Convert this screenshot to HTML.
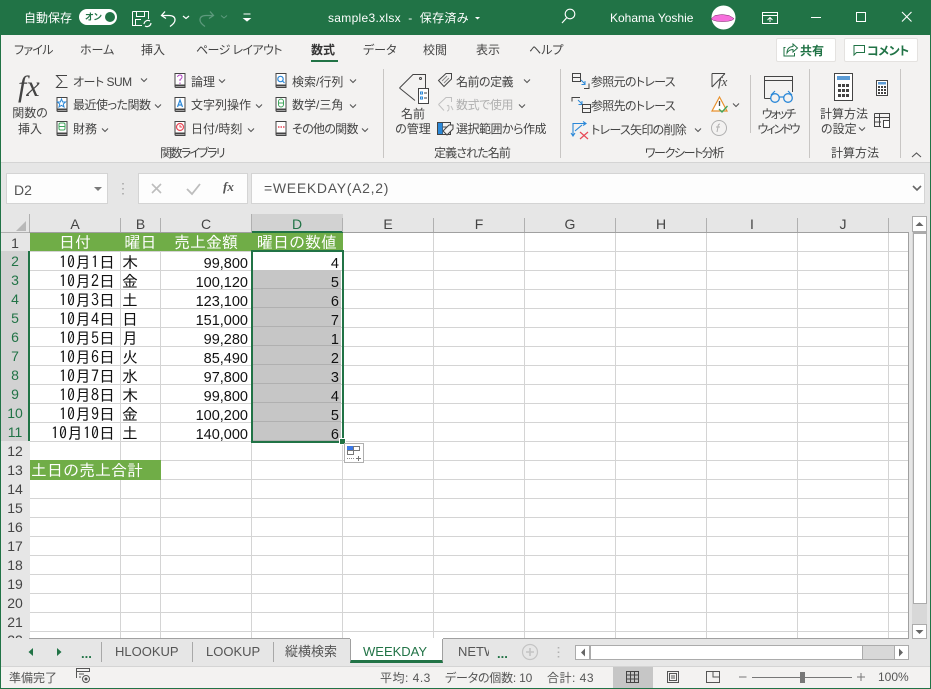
<!DOCTYPE html>
<html lang="ja"><head><meta charset="utf-8"><title>sample3.xlsx</title>
<style>
*{box-sizing:border-box}
html,body{margin:0;padding:0;width:931px;height:689px;overflow:hidden;background:#e6e6e6}
body{position:relative;font-family:"Liberation Sans","Noto Sans CJK JP",sans-serif;font-size:12px;color:#444;font-feature-settings:"palt"}
.a,.t,.c,.r,.h,.n{position:absolute}
.t{white-space:nowrap;line-height:16px;height:16px}
.m{text-align:center;transform:translateX(-50%)}
.w{color:#fff}
.c{font-family:"IPAGothic","Noto Sans CJK JP",sans-serif;font-size:16px;line-height:21px;height:19px;color:#111;white-space:nowrap;font-feature-settings:normal}
.c b{font:14.5px/21px "Liberation Sans",sans-serif;color:#111}
.dt{left:30px;width:85px;text-align:right}
.dy{left:122px}
.am{left:161px;width:87px;text-align:right}
.d{left:252px;width:87px;text-align:right}
.g{color:#fff;text-align:center;font-weight:normal}
.n{left:1px;width:28px;text-align:center;font-size:14px;line-height:21px;height:19px;color:#444}
.s{background:#d2d2d2;width:28px;color:#217346}
.h{top:214px;height:18px;text-align:center;font-size:14px;line-height:20px;color:#444}
.tab{position:absolute;top:644px;line-height:16px;font-size:13px;color:#555;white-space:nowrap}
.sb{position:absolute;top:670px;line-height:16px;font-size:12px;color:#555;white-space:nowrap}
</style></head><body>

<div class="a" style="left:0;top:0;width:931px;height:35px;background:#217346"></div>
<div class="a" style="left:1px;top:35px;width:929px;height:127px;background:#f3f2f1"></div>
<div class="a" style="left:1px;top:162px;width:929px;height:1px;background:#d4d4d4"></div>
<div class="a" style="left:0;top:0;width:1px;height:689px;background:#217346"></div>
<div class="a" style="left:930px;top:0;width:1px;height:689px;background:#217346"></div>

<div class="t w" style="left:24px;top:10px">自動保存</div>
<div class="a" style="left:79px;top:9px;width:38px;height:16px;border-radius:8px;background:#fff"></div>
<div class="a" style="left:105px;top:12px;width:10px;height:10px;border-radius:5px;background:#217346"></div>
<div class="t" style="left:85px;top:9px;font-size:9px;color:#217346;font-weight:bold">オン</div>
<div class="t w" style="left:328px;top:10px;font-size:12px;letter-spacing:.3px">sample3.xlsx&nbsp; -&nbsp; 保存済み</div>
<div class="t w" style="left:610px;top:10px;font-size:12px">Kohama Yoshie</div>

<div class="t" style="left:14px;top:42px;letter-spacing:-.7px">ファイル</div>
<div class="t" style="left:80px;top:42px">ホーム</div>
<div class="t" style="left:141px;top:42px">挿入</div>
<div class="t" style="left:196px;top:42px;letter-spacing:-.6px">ページ レイアウト</div>
<div class="t" style="left:311px;top:42px;font-weight:bold;color:#333">数式</div>
<div class="a" style="left:311px;top:60px;width:27px;height:2px;background:#217346"></div>
<div class="t" style="left:363px;top:42px">データ</div>
<div class="t" style="left:423px;top:42px">校閲</div>
<div class="t" style="left:476px;top:42px">表示</div>
<div class="t" style="left:529px;top:42px">ヘルプ</div>

<div class="a" style="left:776px;top:38px;width:60px;height:24px;background:#fff;border:1px solid #e4e2e0;border-radius:2px"></div>
<div class="t" style="left:800px;top:43px;font-weight:bold;color:#217346">共有</div>
<div class="a" style="left:844px;top:38px;width:74px;height:24px;background:#fff;border:1px solid #e4e2e0;border-radius:2px"></div>
<div class="t" style="left:867px;top:43px;font-weight:bold;color:#217346;letter-spacing:-.4px">コメント</div>

<div class="t" style="left:18px;top:69px;height:36px;font:italic 30px/36px 'Liberation Serif',serif;color:#444">fx</div>
<div class="t m" style="left:30px;top:105px">関数の</div>
<div class="t m" style="left:30px;top:121px">挿入</div>
<div class="t" style="left:73px;top:74px;letter-spacing:-.5px">オート SUM</div>
<div class="t" style="left:73px;top:97px;letter-spacing:-.5px">最近使った関数</div>
<div class="t" style="left:73px;top:121px">財務</div>
<div class="t" style="left:191px;top:74px">論理</div>
<div class="t" style="left:191px;top:97px">文字列操作</div>
<div class="t" style="left:191px;top:121px">日付/時刻</div>
<div class="t" style="left:292px;top:74px">検索/行列</div>
<div class="t" style="left:292px;top:97px">数学/三角</div>
<div class="t" style="left:292px;top:121px;letter-spacing:-.7px">その他の関数</div>
<div class="t m" style="left:192px;top:145px;letter-spacing:-1.7px">関数ライブラリ</div>

<div class="t m" style="left:413px;top:106px">名前</div>
<div class="t m" style="left:413px;top:121px">の管理</div>
<div class="t" style="left:456px;top:74px;letter-spacing:-.5px">名前の定義</div>
<div class="t" style="left:456px;top:97px;color:#b0b0b0;letter-spacing:-.4px">数式で使用</div>
<div class="t" style="left:456px;top:121px;letter-spacing:-.5px">選択範囲から作成</div>
<div class="t m" style="left:472px;top:145px;letter-spacing:-.9px">定義された名前</div>

<div class="t" style="left:591px;top:74px;letter-spacing:-.7px">参照元のトレース</div>
<div class="t" style="left:591px;top:98px;letter-spacing:-.7px">参照先のトレース</div>
<div class="t" style="left:591px;top:122px;letter-spacing:-.7px">トレース矢印の削除</div>
<div class="t m" style="left:684px;top:145px;letter-spacing:-1.4px">ワークシート分析</div>
<div class="t m" style="left:778px;top:106px;letter-spacing:-2px">ウォッチ</div>
<div class="t m" style="left:778px;top:121px;letter-spacing:-2px">ウィンドウ</div>
<div class="t m" style="left:844px;top:106px">計算方法</div>
<div class="t" style="left:821px;top:121px">の設定</div>
<div class="t m" style="left:855px;top:145px">計算方法</div>

<div class="a" style="left:6px;top:173px;width:102px;height:31px;background:#fdfdfd;border:1px solid #d4d4d4"></div>
<div class="t" style="left:14px;top:182px;font-size:14px;color:#555">D2</div>
<div class="a" style="left:138px;top:173px;width:110px;height:31px;background:#fdfdfd;border:1px solid #d4d4d4"></div>
<div class="t" style="left:223px;top:179px;font:italic bold 13px/16px 'Liberation Serif',serif;color:#555">fx</div>
<div class="a" style="left:251px;top:173px;width:674px;height:31px;background:#fdfdfd;border:1px solid #d4d4d4"></div>
<div class="t" style="left:264px;top:180px;font-size:14px;letter-spacing:.7px;color:#555">=WEEKDAY(A2,2)</div>

<div class="a" style="left:30px;top:233px;width:878px;height:405px;background:#fff repeating-linear-gradient(to bottom,transparent 0 18px,#d4d4d4 18px 19px)"></div>
<svg class="a" style="left:0;top:233px" width="908" height="405"><path d="M120.5 0V405M160.5 0V405M251.5 0V405M342.5 0V405M433.5 0V405M524.5 0V405M615.5 0V405M706.5 0V405M797.5 0V405M888.5 0V405" stroke="#d4d4d4" fill="none"/></svg>
<div class="a" style="left:29px;top:232px;width:879px;height:1px;background:#a0a0a0"></div>
<div class="a" style="left:908px;top:232px;width:1px;height:406px;background:#a0a0a0"></div>
<div class="a" style="left:29px;top:638px;width:880px;height:1px;background:#a0a0a0"></div>

<div class="a" style="left:252px;top:214px;width:91px;height:19px;background:#d2d2d2"></div>
<div class="a" style="left:252px;top:231px;width:91px;height:2px;background:#217346"></div>
<svg class="a" style="left:0;top:214px" width="908" height="19"><path d="M29.5 0V18M120.5 4V18M160.5 4V18M251.5 0V18M342.5 4V18M433.5 4V18M524.5 4V18M615.5 4V18M706.5 4V18M797.5 4V18M888.5 4V18" stroke="#b0b0b0" fill="none"/><path d="M16 17L26 17L26 7Z" fill="#b8b8b8"/></svg>
<div class="h" style="left:30px;width:90px">A</div>
<div class="h" style="left:121px;width:39px">B</div>
<div class="h" style="left:161px;width:90px">C</div>
<div class="h" style="left:252px;width:90px;color:#217346">D</div>
<div class="h" style="left:343px;width:90px">E</div>
<div class="h" style="left:434px;width:90px">F</div>
<div class="h" style="left:525px;width:90px">G</div>
<div class="h" style="left:616px;width:90px">H</div>
<div class="h" style="left:707px;width:90px">I</div>
<div class="h" style="left:798px;width:90px">J</div>

<div class="a" style="left:1px;top:232px;width:28px;height:1px;background:#b0b0b0"></div>
<div class="n" style="top:233px;height:18px">1</div>
<div class="n s" style="top:251px;height:190px"></div>
<div class="n" style="top:251px;color:#217346">2</div>
<div class="n" style="top:270px;color:#217346">3</div>
<div class="n" style="top:289px;color:#217346">4</div>
<div class="n" style="top:308px;color:#217346">5</div>
<div class="n" style="top:327px;color:#217346">6</div>
<div class="n" style="top:346px;color:#217346">7</div>
<div class="n" style="top:365px;color:#217346">8</div>
<div class="n" style="top:384px;color:#217346">9</div>
<div class="n" style="top:403px;color:#217346">10</div>
<div class="n" style="top:422px;color:#217346">11</div>
<div class="n" style="top:441px">12</div>
<div class="n" style="top:460px">13</div>
<div class="n" style="top:479px">14</div>
<div class="n" style="top:498px">15</div>
<div class="n" style="top:517px">16</div>
<div class="n" style="top:536px">17</div>
<div class="n" style="top:555px">18</div>
<div class="n" style="top:574px">19</div>
<div class="n" style="top:593px">20</div>
<div class="n" style="top:612px">21</div>
<div class="a" style="left:1px;top:631px;width:28px;height:7px;overflow:hidden;font-size:14px;line-height:19px;text-align:center">22</div>
<div class="a" style="left:28px;top:251px;width:2px;height:190px;background:#217346"></div>

<div class="a" style="left:30px;top:233px;width:313px;height:18px;background:#70ad47"></div>
<div class="c g" style="left:30px;top:232px;width:90px">日付</div>
<div class="c g" style="left:121px;top:232px;width:39px">曜日</div>
<div class="c g" style="left:161px;top:232px;width:90px">売上金額</div>
<div class="c g" style="left:252px;top:232px;width:90px">曜日の数値</div>

<div class="a" style="left:253px;top:270px;width:88px;height:171px;background:#c6c6c6 repeating-linear-gradient(to bottom,transparent 0 18px,#b0b0b0 18px 19px)"></div>
<div class="a" style="left:251px;top:250px;width:93px;height:193px;border:2px solid #217346"></div>
<div class="a" style="left:339px;top:438px;width:7px;height:7px;background:#217346;border:1px solid #fff"></div>

<div class="c dt" style="top:252px">10月1日</div><div class="c dy" style="top:252px">木</div><div class="c am" style="top:252px"><b>99,800</b></div><div class="c d" style="top:252px"><b>4</b></div>
<div class="c dt" style="top:271px">10月2日</div><div class="c dy" style="top:271px">金</div><div class="c am" style="top:271px"><b>100,120</b></div><div class="c d" style="top:271px"><b>5</b></div>
<div class="c dt" style="top:290px">10月3日</div><div class="c dy" style="top:290px">土</div><div class="c am" style="top:290px"><b>123,100</b></div><div class="c d" style="top:290px"><b>6</b></div>
<div class="c dt" style="top:309px">10月4日</div><div class="c dy" style="top:309px">日</div><div class="c am" style="top:309px"><b>151,000</b></div><div class="c d" style="top:309px"><b>7</b></div>
<div class="c dt" style="top:328px">10月5日</div><div class="c dy" style="top:328px">月</div><div class="c am" style="top:328px"><b>99,280</b></div><div class="c d" style="top:328px"><b>1</b></div>
<div class="c dt" style="top:347px">10月6日</div><div class="c dy" style="top:347px">火</div><div class="c am" style="top:347px"><b>85,490</b></div><div class="c d" style="top:347px"><b>2</b></div>
<div class="c dt" style="top:366px">10月7日</div><div class="c dy" style="top:366px">水</div><div class="c am" style="top:366px"><b>97,800</b></div><div class="c d" style="top:366px"><b>3</b></div>
<div class="c dt" style="top:385px">10月8日</div><div class="c dy" style="top:385px">木</div><div class="c am" style="top:385px"><b>99,800</b></div><div class="c d" style="top:385px"><b>4</b></div>
<div class="c dt" style="top:404px">10月9日</div><div class="c dy" style="top:404px">金</div><div class="c am" style="top:404px"><b>100,200</b></div><div class="c d" style="top:404px"><b>5</b></div>
<div class="c dt" style="top:423px">10月10日</div><div class="c dy" style="top:423px">土</div><div class="c am" style="top:423px"><b>140,000</b></div><div class="c d" style="top:423px"><b>6</b></div>

<div class="a" style="left:30px;top:460px;width:131px;height:20px;background:#70ad47"></div>
<div class="c" style="left:31px;top:460px;color:#fff">土日の売上合計</div>

<div class="a" style="left:344px;top:443px;width:20px;height:20px;background:#fff;border:1px solid #b0b0b0"></div>

<div class="a" style="left:912px;top:216px;width:15px;height:422px;background:#d8d8d8"></div>
<div class="a" style="left:912px;top:216px;width:15px;height:16px;background:#fff;border:1px solid #ababab"></div>
<div class="a" style="left:913px;top:232px;width:14px;height:372px;background:#fff;border:1px solid #ababab;border-top:2px solid #ababab"></div>
<div class="a" style="left:912px;top:624px;width:15px;height:15px;background:#fff;border:1px solid #ababab"></div>

<div class="a" style="left:1px;top:639px;width:929px;height:27px;background:#e6e6e6"></div>
<div class="a" style="left:350px;top:638px;width:93px;height:25px;background:#fff;border:1px solid #a0a0a0;border-top:0;border-bottom:3px solid #217346"></div>
<div class="a" style="left:350px;top:638px;width:93px;height:1px;background:#fff"></div>
<div class="a" style="left:101px;top:642px;width:1px;height:20px;background:#a8a8a8"></div>
<div class="a" style="left:192px;top:642px;width:1px;height:20px;background:#a8a8a8"></div>
<div class="a" style="left:273px;top:642px;width:1px;height:20px;background:#a8a8a8"></div>
<div class="t" style="left:81px;top:646px;font-weight:bold;font-size:13px;color:#217346">...</div>
<div class="tab" style="left:115px">HLOOKUP</div>
<div class="tab" style="left:206px">LOOKUP</div>
<div class="tab" style="left:285px">縦横検索</div>
<div class="tab" style="left:363px;color:#217346">WEEKDAY</div>
<div class="tab" style="left:458px;width:31px;overflow:hidden">NETWORK</div>
<div class="t" style="left:497px;top:646px;font-weight:bold;font-size:13px;color:#217346">...</div>

<div class="a" style="left:575px;top:645px;width:334px;height:15px;background:#d8d8d8;border:1px solid #ababab"></div>
<div class="a" style="left:575px;top:645px;width:15px;height:15px;background:#fff;border:1px solid #ababab"></div>
<div class="a" style="left:590px;top:645px;width:273px;height:15px;background:#fff;border:1px solid #ababab"></div>
<div class="a" style="left:894px;top:645px;width:15px;height:15px;background:#fff;border:1px solid #ababab"></div>

<div class="a" style="left:1px;top:666px;width:929px;height:22px;background:#f3f2f1;border-top:1px solid #d4d4d4"></div>
<div class="a" style="left:0;top:688px;width:931px;height:1px;background:#217346"></div>
<div class="a" style="left:613px;top:667px;width:40px;height:21px;background:#c6c6c6"></div>
<div class="sb" style="left:9px">準備完了</div>
<div class="sb" style="left:380px;letter-spacing:.5px">平均: 4.3</div>
<div class="sb" style="left:445px;letter-spacing:-.2px">データの個数: 10</div>
<div class="sb" style="left:547px;letter-spacing:.5px">合計: 43</div>
<div class="sb" style="left:878px;top:669px">100%</div>

<svg class="a" style="left:0;top:0" width="931" height="689" fill="none" stroke-width="1">
<defs>
<g id="bk"><path d="M.5 .5H10.5V14.5H1.5Q.5 14.5 .5 13.5Z" fill="#fff" stroke="#444"/><path d="M.5 12.5H10.5" stroke="#444" stroke-width="2"/></g>
<path id="cv" d="M-3 -1.5L0 1.5L3 -1.5" stroke="#555" stroke-width="1.1"/>
</defs>

<!-- title bar icons -->
<g stroke="#fff">
<path d="M132.5 11.5H148.5V19M132.5 11.5V25.5H142M136.5 11.5V16.5H144.5V11.5M135.5 25V19.5H141"/>
<path d="M144 24a4 4 0 0 1 6 -3M151 23a4 4 0 0 1 -6 3" stroke-width="1.2"/>
<path d="M165 11.5L161.5 15.5L166 18.5M162 15.5H169Q175 15.5 175 20Q175 23 170 26.5" stroke-width="1.3"/>
<path d="M243.5 14H250.5" /><path d="M244 18.5H250L247 21Z" fill="#fff"/>
<circle cx="570" cy="14" r="4.8" stroke-width="1.1"/><path d="M566.5 18L562 23" stroke-width="1.2"/>
<path d="M762.5 12.5H777.5V23.5H762.5ZM762.5 15.5H777.5M770 22V18M767.5 20L770 17.5L772.5 20"/>
<path d="M811 17.5H821"/><rect x="856.5" y="12.5" width="9" height="9"/><path d="M902 12L911.5 21.5M911.5 12L902 21.5" stroke-width="1.1"/>
</g>
<path d="M183 16L186 18.5L189 16" stroke="#fff" stroke-width="1.2"/>
<path d="M475 17H480L477.5 19.5Z" fill="#fff"/>
<g stroke="#5d9a7d"><path d="M205 11.5L208.5 15.5L204 18.5M208 15.5H201Q195 15.5 195 20Q195 23 200 26.5" transform="translate(5 0)" stroke-width="1.3"/></g>
<path d="M221 15.5L224 18L227 15.5" stroke="#5d9a7d"/>
<circle cx="723.5" cy="17.5" r="12" fill="#fff"/>
<path d="M711 19L715 15.5L722 14.5L729 15.5L734 18.5Q733 21 725 21.5Q715 22 711 19Z" fill="#f66fdc" stroke="#7a2a6a" stroke-width=".5"/>

<!-- share / comment -->
<path d="M785.5 47.5H784V56H794.5V53M787 53Q787 47 793 46.5V44L797.5 48L793 52V49.5Q789 49.5 787 53Z" stroke="#217346"/>
<path d="M853.5 45.5H864.5V52.5H856.5L854 55V45.5Z" stroke="#217346"/>

<!-- fx group -->
<path d="M67 75.5H56.5L62 81.5L56.5 87.5H67.5" stroke="#444"/>
<use href="#bk" x="56.5" y="97"/><path d="M61.5 99L62.7 102H65.5L63.3 104L64 107L61.5 105.3L59 107L59.7 104L57.5 102H60.3Z" stroke="#2b88d8" fill="#fff"/>
<use href="#bk" x="56.5" y="121"/><rect x="59" y="123" width="6" height="7" rx="1.5" stroke="#3fa45b"/><path d="M59 126.5H65" stroke="#3fa45b"/>
<use href="#bk" x="174.5" y="73"/><path d="M177.5 77Q178 75 180 75Q182 75 182 77Q182 78.5 180 79.5V81M180 82.5V84" stroke="#b146c2"/>
<use href="#bk" x="174.5" y="97"/><path d="M177.5 107L180 100L182.5 107M178.5 105H181.5" stroke="#2b88d8" stroke-width="1.2"/>
<use href="#bk" x="174.5" y="121"/><circle cx="180" cy="127" r="3.5" stroke="#e74856" stroke-width="1.2"/><path d="M180 125V127H182" stroke="#e74856"/>
<use href="#bk" x="275.5" y="73"/><circle cx="280.5" cy="79" r="2.7" stroke="#2b88d8" stroke-width="1.2"/><path d="M282.5 81L284.5 83" stroke="#2b88d8" stroke-width="1.2"/>
<use href="#bk" x="275.5" y="97"/><rect x="278.5" y="99" width="5" height="8" rx="2.5" stroke="#3fa45b"/><path d="M278.5 103H283.5" stroke="#3fa45b"/>
<use href="#bk" x="275.5" y="121"/><path d="M278 127H279.5M280.5 127H282M283 127H284.5" stroke="#e74856" stroke-width="1.5"/>
<use href="#cv" x="144" y="80"/><use href="#cv" x="158" y="106"/><use href="#cv" x="105" y="130"/>
<use href="#cv" x="222" y="81"/><use href="#cv" x="259" y="106"/><use href="#cv" x="251" y="130"/>
<use href="#cv" x="353" y="81"/><use href="#cv" x="353" y="106"/><use href="#cv" x="365" y="130"/>

<!-- separators -->
<path d="M383.5 69V158M560.5 69V158M750.5 75V133M809.5 69V158M900.5 69V158" stroke="#c8c6c4"/>

<!-- names -->
<path d="M399.5 88L413 74.5H425.5V92M415 100.5L399.5 88" stroke="#444"/>
<circle cx="420.5" cy="78.5" r="1" stroke="#444"/>
<rect x="418.5" y="88.5" width="10" height="15" fill="#fff" stroke="#444"/>
<path d="M420.5 92h2v2h-2zM420.5 97h2v2h-2z" stroke="#2b88d8"/><path d="M424 93H427M424 98H427" stroke="#444"/>
<path d="M438.5 80.5L446 73.5H451.5V79L444 86.5Z" stroke="#444"/><path d="M442 81L447 76M444 83L449 78" stroke="#888"/>
<path d="M438.5 104.5L446 97.5H451.5V102M444 110.5L438.5 104.5" stroke="#c0c0c0"/>
<path d="M447 106Q449 104 449 108Q449 111 447 111M451 106L453 110" stroke="#c0c0c0"/>
<rect x="437.5" y="122.5" width="13" height="12" stroke="#444"/><path d="M437.5 127H450M442.5 122.5V134.5" stroke="#444"/>
<rect x="438" y="123" width="4.5" height="4" fill="#2b88d8"/><rect x="438" y="127" width="4.5" height="7" fill="#2b88d8"/>
<path d="M443 131L449 125H453V129L447 135Z" fill="#f3f2f1" stroke="#444"/>
<use href="#cv" x="527" y="81"/><use href="#cv" x="522" y="106" />

<!-- formula auditing -->
<rect x="572.5" y="73.5" width="8" height="8" stroke="#444"/><path d="M572.5 77.5H580.5" stroke="#444"/><path d="M581 80L585 84M585 81V84.5H581.5" stroke="#2b88d8"/><path d="M589 83.5V88.5H584" stroke="#444"/>
<path d="M572 101.5V97.5H580" stroke="#444"/><path d="M578 100L582 104M582 101V104.5H578.5" stroke="#2b88d8"/><rect x="582.5" y="104.5" width="8" height="8" stroke="#444"/><path d="M582.5 108.5H590.5" stroke="#444"/>
<path d="M573 135V123.5H585M571 133L573 136L575 133M583 121.5L586 123.5L583 125.5M575 131L582 125" stroke="#2b88d8" stroke-width="1.1"/>
<path d="M580 132L588 139M588 132L580 139" stroke="#e74856" stroke-width="1.2"/>
<use href="#cv" x="698" y="130"/><use href="#cv" x="736" y="105"/>
<path d="M712 87L725 73.5M712 73.5H725M712 73.5V87" stroke="#444"/>
<path d="M719.5 97L727 111H712Z" fill="#fff" stroke="#e8912d" stroke-width="1.2"/><path d="M719.5 101V106" stroke="#444" stroke-width="1.3"/><path d="M719 109L722 112L727.5 106" stroke="#3fa45b" stroke-width="1.3"/>
<circle cx="719" cy="128" r="7.5" stroke="#b0b0b0"/><path d="M720 124Q718 124 718 127L717 132M716 127H720" stroke="#b0b0b0"/>
<text x="718" y="86" font-family="Liberation Serif" font-style="italic" font-size="13" fill="#444">fx</text>

<!-- watch -->
<path d="M764.5 98.5V76.5H792.5V92M764.5 80.5H792.5M764.5 98.5H772" stroke="#444"/>
<circle cx="775" cy="98" r="4.3" fill="#f3f2f1" stroke="#2b88d8" stroke-width="1.3"/><circle cx="788" cy="98" r="4.3" fill="#f3f2f1" stroke="#2b88d8" stroke-width="1.3"/>
<path d="M779 97H784M771 95L775 91M792 95L788 91" stroke="#2b88d8" stroke-width="1.2"/>

<!-- calc -->
<rect x="834.5" y="73.5" width="18" height="27" fill="#fff" stroke="#444"/><rect x="837" y="76" width="13" height="4" fill="#5a9bd5"/>
<path d="M838 84h3v3h-3zM842 84h3v3h-3zM846 84h3v3h-3zM838 89h3v3h-3zM842 89h3v3h-3zM846 89h3v3h-3zM838 94h3v3h-3zM842 94h3v3h-3zM846 94h3v3h-3z" fill="#444"/>
<rect x="876.5" y="80.5" width="11" height="15" fill="#fff" stroke="#444"/><rect x="878" y="82" width="8" height="2.5" fill="#5a9bd5"/>
<path d="M878 86h2v2h-2zM881 86h2v2h-2zM884 86h2v2h-2zM878 89h2v2h-2zM881 89h2v2h-2zM884 89h2v2h-2zM878 92h2v2h-2zM881 92h2v2h-2zM884 92h2v2h-2z" fill="#444"/>
<path d="M874.5 113.5H889.5V120M874.5 113.5V126.5H881M874.5 117.5H889.5M874.5 122H881M879.5 113.5V126.5" stroke="#444"/>
<rect x="883.5" y="120.5" width="6" height="7" fill="#fff" stroke="#444"/>
<use href="#cv" x="862" y="129"/>
<path d="M912 157L916.5 153L921 157" stroke="#555" stroke-width="1.1"/>

<!-- formula bar -->
<path d="M94 187H102L98 191Z" fill="#7a7a7a"/>
<path d="M123 183v1.5M123 188v1.5M123 193v1.5" stroke="#a8a8a8" stroke-width="1.6"/>
<path d="M152 184L161 193M161 184L152 193" stroke="#bdbdbd" stroke-width="1.6"/>
<path d="M187 189L192 194L200 184" stroke="#bdbdbd" stroke-width="1.8"/>
<path d="M913 186L917 190L921 186" stroke="#666" stroke-width="1.6"/>

<!-- scrollbar arrows -->
<path d="M915.5 226H923.5L919.5 222Z" fill="#666"/>
<path d="M915.5 630H923.5L919.5 634Z" fill="#666"/>
<path d="M585 648.5V656.5L581 652.5Z" fill="#666"/>
<path d="M899 648.5V656.5L903 652.5Z" fill="#666"/>
<path d="M33 648V656L28.5 652Z" fill="#217346"/>
<path d="M57 648V656L61.5 652Z" fill="#217346"/>
<circle cx="530" cy="652" r="7.5" stroke="#c4c4c4" stroke-width="1.2"/><path d="M526 652H534M530 648V656" stroke="#c4c4c4" stroke-width="1.6"/>
<path d="M558.5 647v1.5M558.5 651.5v1.5M558.5 656v1.5" stroke="#b0b0b0" stroke-width="1.6"/>

<!-- flash fill icon -->
<rect x="347.5" y="446.5" width="6" height="4" fill="#3b78e7" stroke="#3b78e7"/><rect x="353.5" y="446.5" width="6" height="4" stroke="#777"/><rect x="347.5" y="450.5" width="6" height="4" stroke="#777"/>
<path d="M347 458.5H354" stroke="#888" stroke-dasharray="1 1"/><path d="M356 458.5H361M358.5 456V461" stroke="#777"/>

<!-- status icons -->
<path d="M76.5 678V668.5H89.5V672M76.5 671.5H89.5M79 674H84M79 677H81" stroke="#555"/><circle cx="86" cy="679" r="3.5" stroke="#555"/><circle cx="86" cy="679" r="1.5" fill="#555"/>
<path d="M626.5 671.5H638.5V682.5H626.5ZM626.5 675H638.5M626.5 679H638.5M630.5 671.5V682.5M634.5 671.5V682.5" stroke="#444"/>
<rect x="667.5" y="671.5" width="11" height="11" stroke="#555"/><rect x="669.5" y="673.5" width="7" height="7" stroke="#555"/><path d="M671 676H675M671 678H675" stroke="#555"/>
<path d="M706.5 671.5H719.5V682.5H706.5ZM713 671.5V677H719.5" stroke="#555"/>
<path d="M739 677H746.5M857 677H865M861 673V681M752 677.5H852" stroke="#777"/>
<rect x="800" y="672" width="5" height="11" fill="#777"/>
</svg>
</body></html>
